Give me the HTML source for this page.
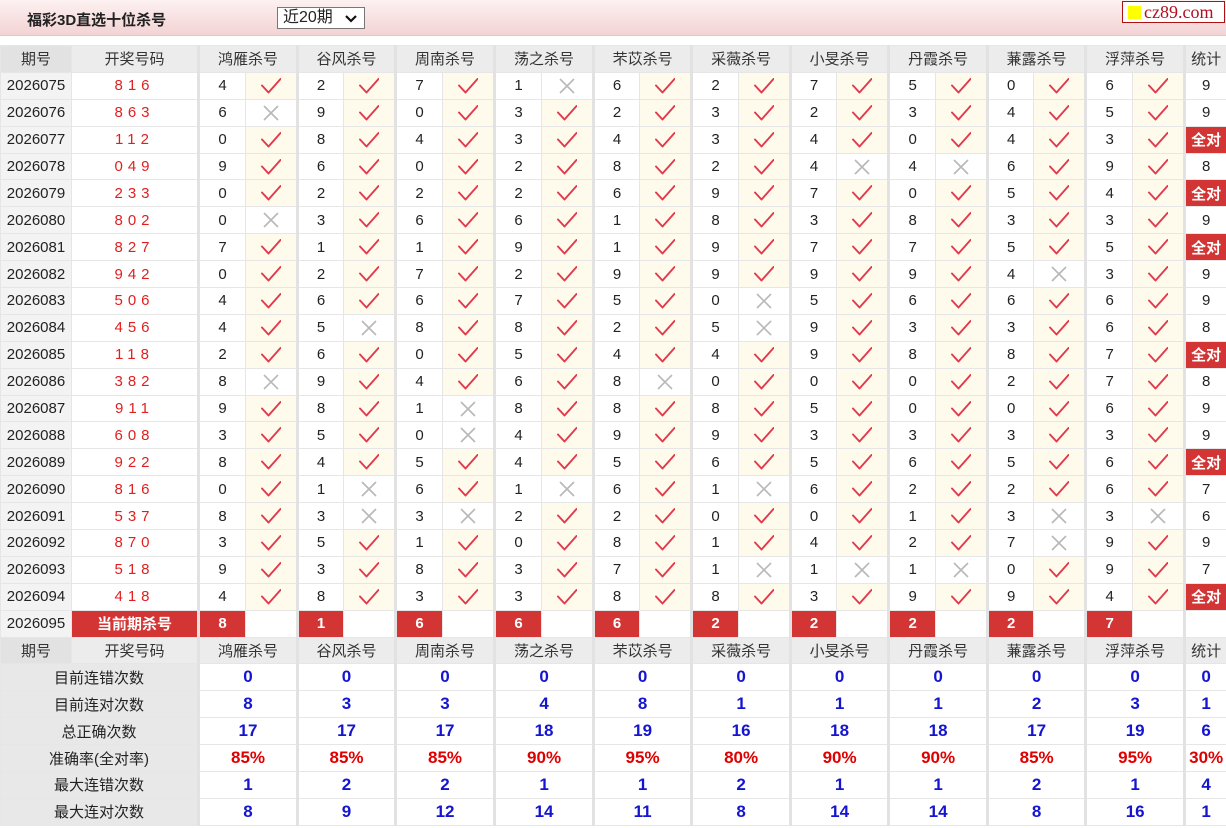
<!DOCTYPE html>
<html><head><meta charset="utf-8"><style>
*{margin:0;padding:0;box-sizing:border-box}
body{width:1226px;height:828px;background:#fff;font-family:"Liberation Sans","Noto Sans CJK SC",sans-serif;overflow:hidden;position:relative}
.top{position:absolute;left:0;top:0;width:1226px;height:36px;background:linear-gradient(#fdf1f1,#f3d3d4);border-bottom:1px solid #e8c4c4}
.title{position:absolute;left:27px;top:9px;font-size:15px;font-weight:bold;color:#222}
.sel{position:absolute;left:277px;top:7px;width:88px;height:22px;border:1px solid #777;background:#fff;font-size:16px;padding-left:5px;line-height:20px;color:#222}
.sel svg{position:absolute;right:7px;top:7px}
.logo{position:absolute;left:1122px;top:1px;width:103px;height:22px;border:1px solid #b01010;background:#fff;font-family:"Liberation Serif",serif;font-size:18px;color:#b01020;line-height:20px;padding-left:21px;white-space:nowrap;overflow:hidden}
.logo i{position:absolute;left:5px;top:4px;width:13px;height:13px;background:#ffff00}
table{position:absolute;left:0;top:45px;border-collapse:collapse;table-layout:fixed;width:1226px}
td{height:26.9px;border:1px solid #e6e6e6;text-align:center;font-size:15px;color:#222;padding:0;white-space:nowrap;overflow:hidden}
td.g{border-left:3px solid #e2e2e2}
tr.h td{background:#ececec;color:#333}
tr.h td.p{background:#e2e2e2}
td.p{background:#f3f3f3}
td.c{color:#e02020;letter-spacing:5px;font-size:15px}
td.y{background:#fffbec}
td.r{background:#d33434;color:#fff;font-weight:bold}
td.s{background:#e8e8e8;color:#222}
td.b{color:#1515d0;font-weight:bold;font-size:17px}
td.q{color:#e00000;font-weight:bold;font-size:17px}
td svg{display:block;margin:0 auto}
</style></head><body>
<div class="top"><div class="title">福彩3D直选十位杀号</div>
<div class="sel">近20期<svg width="12" height="8" viewBox="0 0 12 8"><path d="M1 1L6 6L11 1" stroke="#111" stroke-width="2.2" fill="none"/></svg></div>
<div class="logo"><i></i>cz89.com</div></div>
<svg width="0" height="0" style="position:absolute"><defs>
<symbol id="k" viewBox="0 0 20 16"><path d="M1 7.5L7.5 14.5L19.5 1" stroke="#e03a4c" stroke-width="1.9" fill="none" stroke-linecap="round" stroke-linejoin="round"/></symbol>
<symbol id="x" viewBox="0 0 16 16"><path d="M1 1L15 15M15 1L1 15" stroke="#b8b8b8" stroke-width="1.6" fill="none"/></symbol>
</defs></svg>
<table>
<colgroup><col style="width:71px"><col style="width:127px">
<col style="width:47px"><col style="width:52px"><col style="width:46px"><col style="width:52px"><col style="width:47px"><col style="width:52px"><col style="width:47px"><col style="width:52px"><col style="width:46px"><col style="width:52px"><col style="width:47px"><col style="width:52px"><col style="width:46px"><col style="width:52px"><col style="width:47px"><col style="width:52px"><col style="width:46px"><col style="width:52px"><col style="width:47px"><col style="width:52px"><col style="width:42px"></colgroup>
<tr class="h"><td class="p">期号</td><td>开奖号码</td><td class="g" colspan="2">鸿雁杀号</td><td class="g" colspan="2">谷风杀号</td><td class="g" colspan="2">周南杀号</td><td class="g" colspan="2">荡之杀号</td><td class="g" colspan="2">芣苡杀号</td><td class="g" colspan="2">采薇杀号</td><td class="g" colspan="2">小旻杀号</td><td class="g" colspan="2">丹霞杀号</td><td class="g" colspan="2">蒹露杀号</td><td class="g" colspan="2">浮萍杀号</td><td class="g">统计</td></tr>
<tr><td class="p">2026075</td><td class="c">816</td><td class="g">4</td><td class="y"><svg width="20" height="16"><use href="#k"/></svg></td><td class="g">2</td><td class="y"><svg width="20" height="16"><use href="#k"/></svg></td><td class="g">7</td><td class="y"><svg width="20" height="16"><use href="#k"/></svg></td><td class="g">1</td><td><svg width="16" height="16"><use href="#x"/></svg></td><td class="g">6</td><td class="y"><svg width="20" height="16"><use href="#k"/></svg></td><td class="g">2</td><td class="y"><svg width="20" height="16"><use href="#k"/></svg></td><td class="g">7</td><td class="y"><svg width="20" height="16"><use href="#k"/></svg></td><td class="g">5</td><td class="y"><svg width="20" height="16"><use href="#k"/></svg></td><td class="g">0</td><td class="y"><svg width="20" height="16"><use href="#k"/></svg></td><td class="g">6</td><td class="y"><svg width="20" height="16"><use href="#k"/></svg></td><td class="g">9</td></tr>
<tr><td class="p">2026076</td><td class="c">863</td><td class="g">6</td><td><svg width="16" height="16"><use href="#x"/></svg></td><td class="g">9</td><td class="y"><svg width="20" height="16"><use href="#k"/></svg></td><td class="g">0</td><td class="y"><svg width="20" height="16"><use href="#k"/></svg></td><td class="g">3</td><td class="y"><svg width="20" height="16"><use href="#k"/></svg></td><td class="g">2</td><td class="y"><svg width="20" height="16"><use href="#k"/></svg></td><td class="g">3</td><td class="y"><svg width="20" height="16"><use href="#k"/></svg></td><td class="g">2</td><td class="y"><svg width="20" height="16"><use href="#k"/></svg></td><td class="g">3</td><td class="y"><svg width="20" height="16"><use href="#k"/></svg></td><td class="g">4</td><td class="y"><svg width="20" height="16"><use href="#k"/></svg></td><td class="g">5</td><td class="y"><svg width="20" height="16"><use href="#k"/></svg></td><td class="g">9</td></tr>
<tr><td class="p">2026077</td><td class="c">112</td><td class="g">0</td><td class="y"><svg width="20" height="16"><use href="#k"/></svg></td><td class="g">8</td><td class="y"><svg width="20" height="16"><use href="#k"/></svg></td><td class="g">4</td><td class="y"><svg width="20" height="16"><use href="#k"/></svg></td><td class="g">3</td><td class="y"><svg width="20" height="16"><use href="#k"/></svg></td><td class="g">4</td><td class="y"><svg width="20" height="16"><use href="#k"/></svg></td><td class="g">3</td><td class="y"><svg width="20" height="16"><use href="#k"/></svg></td><td class="g">4</td><td class="y"><svg width="20" height="16"><use href="#k"/></svg></td><td class="g">0</td><td class="y"><svg width="20" height="16"><use href="#k"/></svg></td><td class="g">4</td><td class="y"><svg width="20" height="16"><use href="#k"/></svg></td><td class="g">3</td><td class="y"><svg width="20" height="16"><use href="#k"/></svg></td><td class="g r">全对</td></tr>
<tr><td class="p">2026078</td><td class="c">049</td><td class="g">9</td><td class="y"><svg width="20" height="16"><use href="#k"/></svg></td><td class="g">6</td><td class="y"><svg width="20" height="16"><use href="#k"/></svg></td><td class="g">0</td><td class="y"><svg width="20" height="16"><use href="#k"/></svg></td><td class="g">2</td><td class="y"><svg width="20" height="16"><use href="#k"/></svg></td><td class="g">8</td><td class="y"><svg width="20" height="16"><use href="#k"/></svg></td><td class="g">2</td><td class="y"><svg width="20" height="16"><use href="#k"/></svg></td><td class="g">4</td><td><svg width="16" height="16"><use href="#x"/></svg></td><td class="g">4</td><td><svg width="16" height="16"><use href="#x"/></svg></td><td class="g">6</td><td class="y"><svg width="20" height="16"><use href="#k"/></svg></td><td class="g">9</td><td class="y"><svg width="20" height="16"><use href="#k"/></svg></td><td class="g">8</td></tr>
<tr><td class="p">2026079</td><td class="c">233</td><td class="g">0</td><td class="y"><svg width="20" height="16"><use href="#k"/></svg></td><td class="g">2</td><td class="y"><svg width="20" height="16"><use href="#k"/></svg></td><td class="g">2</td><td class="y"><svg width="20" height="16"><use href="#k"/></svg></td><td class="g">2</td><td class="y"><svg width="20" height="16"><use href="#k"/></svg></td><td class="g">6</td><td class="y"><svg width="20" height="16"><use href="#k"/></svg></td><td class="g">9</td><td class="y"><svg width="20" height="16"><use href="#k"/></svg></td><td class="g">7</td><td class="y"><svg width="20" height="16"><use href="#k"/></svg></td><td class="g">0</td><td class="y"><svg width="20" height="16"><use href="#k"/></svg></td><td class="g">5</td><td class="y"><svg width="20" height="16"><use href="#k"/></svg></td><td class="g">4</td><td class="y"><svg width="20" height="16"><use href="#k"/></svg></td><td class="g r">全对</td></tr>
<tr><td class="p">2026080</td><td class="c">802</td><td class="g">0</td><td><svg width="16" height="16"><use href="#x"/></svg></td><td class="g">3</td><td class="y"><svg width="20" height="16"><use href="#k"/></svg></td><td class="g">6</td><td class="y"><svg width="20" height="16"><use href="#k"/></svg></td><td class="g">6</td><td class="y"><svg width="20" height="16"><use href="#k"/></svg></td><td class="g">1</td><td class="y"><svg width="20" height="16"><use href="#k"/></svg></td><td class="g">8</td><td class="y"><svg width="20" height="16"><use href="#k"/></svg></td><td class="g">3</td><td class="y"><svg width="20" height="16"><use href="#k"/></svg></td><td class="g">8</td><td class="y"><svg width="20" height="16"><use href="#k"/></svg></td><td class="g">3</td><td class="y"><svg width="20" height="16"><use href="#k"/></svg></td><td class="g">3</td><td class="y"><svg width="20" height="16"><use href="#k"/></svg></td><td class="g">9</td></tr>
<tr><td class="p">2026081</td><td class="c">827</td><td class="g">7</td><td class="y"><svg width="20" height="16"><use href="#k"/></svg></td><td class="g">1</td><td class="y"><svg width="20" height="16"><use href="#k"/></svg></td><td class="g">1</td><td class="y"><svg width="20" height="16"><use href="#k"/></svg></td><td class="g">9</td><td class="y"><svg width="20" height="16"><use href="#k"/></svg></td><td class="g">1</td><td class="y"><svg width="20" height="16"><use href="#k"/></svg></td><td class="g">9</td><td class="y"><svg width="20" height="16"><use href="#k"/></svg></td><td class="g">7</td><td class="y"><svg width="20" height="16"><use href="#k"/></svg></td><td class="g">7</td><td class="y"><svg width="20" height="16"><use href="#k"/></svg></td><td class="g">5</td><td class="y"><svg width="20" height="16"><use href="#k"/></svg></td><td class="g">5</td><td class="y"><svg width="20" height="16"><use href="#k"/></svg></td><td class="g r">全对</td></tr>
<tr><td class="p">2026082</td><td class="c">942</td><td class="g">0</td><td class="y"><svg width="20" height="16"><use href="#k"/></svg></td><td class="g">2</td><td class="y"><svg width="20" height="16"><use href="#k"/></svg></td><td class="g">7</td><td class="y"><svg width="20" height="16"><use href="#k"/></svg></td><td class="g">2</td><td class="y"><svg width="20" height="16"><use href="#k"/></svg></td><td class="g">9</td><td class="y"><svg width="20" height="16"><use href="#k"/></svg></td><td class="g">9</td><td class="y"><svg width="20" height="16"><use href="#k"/></svg></td><td class="g">9</td><td class="y"><svg width="20" height="16"><use href="#k"/></svg></td><td class="g">9</td><td class="y"><svg width="20" height="16"><use href="#k"/></svg></td><td class="g">4</td><td><svg width="16" height="16"><use href="#x"/></svg></td><td class="g">3</td><td class="y"><svg width="20" height="16"><use href="#k"/></svg></td><td class="g">9</td></tr>
<tr><td class="p">2026083</td><td class="c">506</td><td class="g">4</td><td class="y"><svg width="20" height="16"><use href="#k"/></svg></td><td class="g">6</td><td class="y"><svg width="20" height="16"><use href="#k"/></svg></td><td class="g">6</td><td class="y"><svg width="20" height="16"><use href="#k"/></svg></td><td class="g">7</td><td class="y"><svg width="20" height="16"><use href="#k"/></svg></td><td class="g">5</td><td class="y"><svg width="20" height="16"><use href="#k"/></svg></td><td class="g">0</td><td><svg width="16" height="16"><use href="#x"/></svg></td><td class="g">5</td><td class="y"><svg width="20" height="16"><use href="#k"/></svg></td><td class="g">6</td><td class="y"><svg width="20" height="16"><use href="#k"/></svg></td><td class="g">6</td><td class="y"><svg width="20" height="16"><use href="#k"/></svg></td><td class="g">6</td><td class="y"><svg width="20" height="16"><use href="#k"/></svg></td><td class="g">9</td></tr>
<tr><td class="p">2026084</td><td class="c">456</td><td class="g">4</td><td class="y"><svg width="20" height="16"><use href="#k"/></svg></td><td class="g">5</td><td><svg width="16" height="16"><use href="#x"/></svg></td><td class="g">8</td><td class="y"><svg width="20" height="16"><use href="#k"/></svg></td><td class="g">8</td><td class="y"><svg width="20" height="16"><use href="#k"/></svg></td><td class="g">2</td><td class="y"><svg width="20" height="16"><use href="#k"/></svg></td><td class="g">5</td><td><svg width="16" height="16"><use href="#x"/></svg></td><td class="g">9</td><td class="y"><svg width="20" height="16"><use href="#k"/></svg></td><td class="g">3</td><td class="y"><svg width="20" height="16"><use href="#k"/></svg></td><td class="g">3</td><td class="y"><svg width="20" height="16"><use href="#k"/></svg></td><td class="g">6</td><td class="y"><svg width="20" height="16"><use href="#k"/></svg></td><td class="g">8</td></tr>
<tr><td class="p">2026085</td><td class="c">118</td><td class="g">2</td><td class="y"><svg width="20" height="16"><use href="#k"/></svg></td><td class="g">6</td><td class="y"><svg width="20" height="16"><use href="#k"/></svg></td><td class="g">0</td><td class="y"><svg width="20" height="16"><use href="#k"/></svg></td><td class="g">5</td><td class="y"><svg width="20" height="16"><use href="#k"/></svg></td><td class="g">4</td><td class="y"><svg width="20" height="16"><use href="#k"/></svg></td><td class="g">4</td><td class="y"><svg width="20" height="16"><use href="#k"/></svg></td><td class="g">9</td><td class="y"><svg width="20" height="16"><use href="#k"/></svg></td><td class="g">8</td><td class="y"><svg width="20" height="16"><use href="#k"/></svg></td><td class="g">8</td><td class="y"><svg width="20" height="16"><use href="#k"/></svg></td><td class="g">7</td><td class="y"><svg width="20" height="16"><use href="#k"/></svg></td><td class="g r">全对</td></tr>
<tr><td class="p">2026086</td><td class="c">382</td><td class="g">8</td><td><svg width="16" height="16"><use href="#x"/></svg></td><td class="g">9</td><td class="y"><svg width="20" height="16"><use href="#k"/></svg></td><td class="g">4</td><td class="y"><svg width="20" height="16"><use href="#k"/></svg></td><td class="g">6</td><td class="y"><svg width="20" height="16"><use href="#k"/></svg></td><td class="g">8</td><td><svg width="16" height="16"><use href="#x"/></svg></td><td class="g">0</td><td class="y"><svg width="20" height="16"><use href="#k"/></svg></td><td class="g">0</td><td class="y"><svg width="20" height="16"><use href="#k"/></svg></td><td class="g">0</td><td class="y"><svg width="20" height="16"><use href="#k"/></svg></td><td class="g">2</td><td class="y"><svg width="20" height="16"><use href="#k"/></svg></td><td class="g">7</td><td class="y"><svg width="20" height="16"><use href="#k"/></svg></td><td class="g">8</td></tr>
<tr><td class="p">2026087</td><td class="c">911</td><td class="g">9</td><td class="y"><svg width="20" height="16"><use href="#k"/></svg></td><td class="g">8</td><td class="y"><svg width="20" height="16"><use href="#k"/></svg></td><td class="g">1</td><td><svg width="16" height="16"><use href="#x"/></svg></td><td class="g">8</td><td class="y"><svg width="20" height="16"><use href="#k"/></svg></td><td class="g">8</td><td class="y"><svg width="20" height="16"><use href="#k"/></svg></td><td class="g">8</td><td class="y"><svg width="20" height="16"><use href="#k"/></svg></td><td class="g">5</td><td class="y"><svg width="20" height="16"><use href="#k"/></svg></td><td class="g">0</td><td class="y"><svg width="20" height="16"><use href="#k"/></svg></td><td class="g">0</td><td class="y"><svg width="20" height="16"><use href="#k"/></svg></td><td class="g">6</td><td class="y"><svg width="20" height="16"><use href="#k"/></svg></td><td class="g">9</td></tr>
<tr><td class="p">2026088</td><td class="c">608</td><td class="g">3</td><td class="y"><svg width="20" height="16"><use href="#k"/></svg></td><td class="g">5</td><td class="y"><svg width="20" height="16"><use href="#k"/></svg></td><td class="g">0</td><td><svg width="16" height="16"><use href="#x"/></svg></td><td class="g">4</td><td class="y"><svg width="20" height="16"><use href="#k"/></svg></td><td class="g">9</td><td class="y"><svg width="20" height="16"><use href="#k"/></svg></td><td class="g">9</td><td class="y"><svg width="20" height="16"><use href="#k"/></svg></td><td class="g">3</td><td class="y"><svg width="20" height="16"><use href="#k"/></svg></td><td class="g">3</td><td class="y"><svg width="20" height="16"><use href="#k"/></svg></td><td class="g">3</td><td class="y"><svg width="20" height="16"><use href="#k"/></svg></td><td class="g">3</td><td class="y"><svg width="20" height="16"><use href="#k"/></svg></td><td class="g">9</td></tr>
<tr><td class="p">2026089</td><td class="c">922</td><td class="g">8</td><td class="y"><svg width="20" height="16"><use href="#k"/></svg></td><td class="g">4</td><td class="y"><svg width="20" height="16"><use href="#k"/></svg></td><td class="g">5</td><td class="y"><svg width="20" height="16"><use href="#k"/></svg></td><td class="g">4</td><td class="y"><svg width="20" height="16"><use href="#k"/></svg></td><td class="g">5</td><td class="y"><svg width="20" height="16"><use href="#k"/></svg></td><td class="g">6</td><td class="y"><svg width="20" height="16"><use href="#k"/></svg></td><td class="g">5</td><td class="y"><svg width="20" height="16"><use href="#k"/></svg></td><td class="g">6</td><td class="y"><svg width="20" height="16"><use href="#k"/></svg></td><td class="g">5</td><td class="y"><svg width="20" height="16"><use href="#k"/></svg></td><td class="g">6</td><td class="y"><svg width="20" height="16"><use href="#k"/></svg></td><td class="g r">全对</td></tr>
<tr><td class="p">2026090</td><td class="c">816</td><td class="g">0</td><td class="y"><svg width="20" height="16"><use href="#k"/></svg></td><td class="g">1</td><td><svg width="16" height="16"><use href="#x"/></svg></td><td class="g">6</td><td class="y"><svg width="20" height="16"><use href="#k"/></svg></td><td class="g">1</td><td><svg width="16" height="16"><use href="#x"/></svg></td><td class="g">6</td><td class="y"><svg width="20" height="16"><use href="#k"/></svg></td><td class="g">1</td><td><svg width="16" height="16"><use href="#x"/></svg></td><td class="g">6</td><td class="y"><svg width="20" height="16"><use href="#k"/></svg></td><td class="g">2</td><td class="y"><svg width="20" height="16"><use href="#k"/></svg></td><td class="g">2</td><td class="y"><svg width="20" height="16"><use href="#k"/></svg></td><td class="g">6</td><td class="y"><svg width="20" height="16"><use href="#k"/></svg></td><td class="g">7</td></tr>
<tr><td class="p">2026091</td><td class="c">537</td><td class="g">8</td><td class="y"><svg width="20" height="16"><use href="#k"/></svg></td><td class="g">3</td><td><svg width="16" height="16"><use href="#x"/></svg></td><td class="g">3</td><td><svg width="16" height="16"><use href="#x"/></svg></td><td class="g">2</td><td class="y"><svg width="20" height="16"><use href="#k"/></svg></td><td class="g">2</td><td class="y"><svg width="20" height="16"><use href="#k"/></svg></td><td class="g">0</td><td class="y"><svg width="20" height="16"><use href="#k"/></svg></td><td class="g">0</td><td class="y"><svg width="20" height="16"><use href="#k"/></svg></td><td class="g">1</td><td class="y"><svg width="20" height="16"><use href="#k"/></svg></td><td class="g">3</td><td><svg width="16" height="16"><use href="#x"/></svg></td><td class="g">3</td><td><svg width="16" height="16"><use href="#x"/></svg></td><td class="g">6</td></tr>
<tr><td class="p">2026092</td><td class="c">870</td><td class="g">3</td><td class="y"><svg width="20" height="16"><use href="#k"/></svg></td><td class="g">5</td><td class="y"><svg width="20" height="16"><use href="#k"/></svg></td><td class="g">1</td><td class="y"><svg width="20" height="16"><use href="#k"/></svg></td><td class="g">0</td><td class="y"><svg width="20" height="16"><use href="#k"/></svg></td><td class="g">8</td><td class="y"><svg width="20" height="16"><use href="#k"/></svg></td><td class="g">1</td><td class="y"><svg width="20" height="16"><use href="#k"/></svg></td><td class="g">4</td><td class="y"><svg width="20" height="16"><use href="#k"/></svg></td><td class="g">2</td><td class="y"><svg width="20" height="16"><use href="#k"/></svg></td><td class="g">7</td><td><svg width="16" height="16"><use href="#x"/></svg></td><td class="g">9</td><td class="y"><svg width="20" height="16"><use href="#k"/></svg></td><td class="g">9</td></tr>
<tr><td class="p">2026093</td><td class="c">518</td><td class="g">9</td><td class="y"><svg width="20" height="16"><use href="#k"/></svg></td><td class="g">3</td><td class="y"><svg width="20" height="16"><use href="#k"/></svg></td><td class="g">8</td><td class="y"><svg width="20" height="16"><use href="#k"/></svg></td><td class="g">3</td><td class="y"><svg width="20" height="16"><use href="#k"/></svg></td><td class="g">7</td><td class="y"><svg width="20" height="16"><use href="#k"/></svg></td><td class="g">1</td><td><svg width="16" height="16"><use href="#x"/></svg></td><td class="g">1</td><td><svg width="16" height="16"><use href="#x"/></svg></td><td class="g">1</td><td><svg width="16" height="16"><use href="#x"/></svg></td><td class="g">0</td><td class="y"><svg width="20" height="16"><use href="#k"/></svg></td><td class="g">9</td><td class="y"><svg width="20" height="16"><use href="#k"/></svg></td><td class="g">7</td></tr>
<tr><td class="p">2026094</td><td class="c">418</td><td class="g">4</td><td class="y"><svg width="20" height="16"><use href="#k"/></svg></td><td class="g">8</td><td class="y"><svg width="20" height="16"><use href="#k"/></svg></td><td class="g">3</td><td class="y"><svg width="20" height="16"><use href="#k"/></svg></td><td class="g">3</td><td class="y"><svg width="20" height="16"><use href="#k"/></svg></td><td class="g">8</td><td class="y"><svg width="20" height="16"><use href="#k"/></svg></td><td class="g">8</td><td class="y"><svg width="20" height="16"><use href="#k"/></svg></td><td class="g">3</td><td class="y"><svg width="20" height="16"><use href="#k"/></svg></td><td class="g">9</td><td class="y"><svg width="20" height="16"><use href="#k"/></svg></td><td class="g">9</td><td class="y"><svg width="20" height="16"><use href="#k"/></svg></td><td class="g">4</td><td class="y"><svg width="20" height="16"><use href="#k"/></svg></td><td class="g r">全对</td></tr>
<tr><td class="p">2026095</td><td class="r">当前期杀号</td><td class="g r">8</td><td></td><td class="g r">1</td><td></td><td class="g r">6</td><td></td><td class="g r">6</td><td></td><td class="g r">6</td><td></td><td class="g r">2</td><td></td><td class="g r">2</td><td></td><td class="g r">2</td><td></td><td class="g r">2</td><td></td><td class="g r">7</td><td></td><td class="g"></td></tr>
<tr class="h"><td class="p">期号</td><td>开奖号码</td><td class="g" colspan="2">鸿雁杀号</td><td class="g" colspan="2">谷风杀号</td><td class="g" colspan="2">周南杀号</td><td class="g" colspan="2">荡之杀号</td><td class="g" colspan="2">芣苡杀号</td><td class="g" colspan="2">采薇杀号</td><td class="g" colspan="2">小旻杀号</td><td class="g" colspan="2">丹霞杀号</td><td class="g" colspan="2">蒹露杀号</td><td class="g" colspan="2">浮萍杀号</td><td class="g">统计</td></tr>
<tr><td class="s" colspan="2">目前连错次数</td><td class="g b" colspan="2">0</td><td class="g b" colspan="2">0</td><td class="g b" colspan="2">0</td><td class="g b" colspan="2">0</td><td class="g b" colspan="2">0</td><td class="g b" colspan="2">0</td><td class="g b" colspan="2">0</td><td class="g b" colspan="2">0</td><td class="g b" colspan="2">0</td><td class="g b" colspan="2">0</td><td class="g b">0</td></tr>
<tr><td class="s" colspan="2">目前连对次数</td><td class="g b" colspan="2">8</td><td class="g b" colspan="2">3</td><td class="g b" colspan="2">3</td><td class="g b" colspan="2">4</td><td class="g b" colspan="2">8</td><td class="g b" colspan="2">1</td><td class="g b" colspan="2">1</td><td class="g b" colspan="2">1</td><td class="g b" colspan="2">2</td><td class="g b" colspan="2">3</td><td class="g b">1</td></tr>
<tr><td class="s" colspan="2">总正确次数</td><td class="g b" colspan="2">17</td><td class="g b" colspan="2">17</td><td class="g b" colspan="2">17</td><td class="g b" colspan="2">18</td><td class="g b" colspan="2">19</td><td class="g b" colspan="2">16</td><td class="g b" colspan="2">18</td><td class="g b" colspan="2">18</td><td class="g b" colspan="2">17</td><td class="g b" colspan="2">19</td><td class="g b">6</td></tr>
<tr><td class="s" colspan="2">准确率(全对率)</td><td class="g q" colspan="2">85%</td><td class="g q" colspan="2">85%</td><td class="g q" colspan="2">85%</td><td class="g q" colspan="2">90%</td><td class="g q" colspan="2">95%</td><td class="g q" colspan="2">80%</td><td class="g q" colspan="2">90%</td><td class="g q" colspan="2">90%</td><td class="g q" colspan="2">85%</td><td class="g q" colspan="2">95%</td><td class="g q">30%</td></tr>
<tr><td class="s" colspan="2">最大连错次数</td><td class="g b" colspan="2">1</td><td class="g b" colspan="2">2</td><td class="g b" colspan="2">2</td><td class="g b" colspan="2">1</td><td class="g b" colspan="2">1</td><td class="g b" colspan="2">2</td><td class="g b" colspan="2">1</td><td class="g b" colspan="2">1</td><td class="g b" colspan="2">2</td><td class="g b" colspan="2">1</td><td class="g b">4</td></tr>
<tr><td class="s" colspan="2">最大连对次数</td><td class="g b" colspan="2">8</td><td class="g b" colspan="2">9</td><td class="g b" colspan="2">12</td><td class="g b" colspan="2">14</td><td class="g b" colspan="2">11</td><td class="g b" colspan="2">8</td><td class="g b" colspan="2">14</td><td class="g b" colspan="2">14</td><td class="g b" colspan="2">8</td><td class="g b" colspan="2">16</td><td class="g b">1</td></tr>
</table>
</body></html>
